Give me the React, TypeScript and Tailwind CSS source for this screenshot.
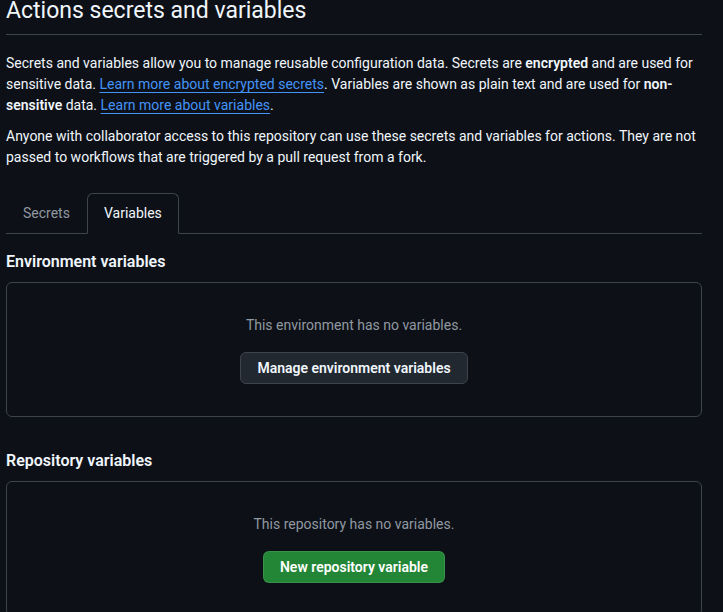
import React from "react";

export default function App() {
  return (
    <div className="min-h-screen bg-[#0d1117] text-[#f0f6fc] font-['Roboto',sans-serif] pl-[6px] pr-[21px] overflow-hidden">
      <div className="-mt-[4px] pb-2 border-b border-[#3d444d] mb-[18px]">
        <h2 className="text-[23px] leading-[30px] font-normal">Actions secrets and variables</h2>
      </div>

      <p className="text-[14px] leading-[21px] mb-[10px]">
        Secrets and variables allow you to manage reusable configuration data. Secrets are{" "}
        <strong className="font-semibold">encrypted</strong> and are used for sensitive data.{" "}
        <a href="#" className="text-[#4493f8] underline underline-offset-[3px]">
          Learn more about encrypted secrets
        </a>
        . Variables are shown as plain text and are used for{" "}
        <strong className="font-semibold">non-sensitive</strong> data.{" "}
        <a href="#" className="text-[#4493f8] underline underline-offset-[3px]">
          Learn more about variables
        </a>
        .
      </p>
      <p className="text-[14px] leading-[21px]">
        Anyone with collaborator access to this repository can use these secrets and variables for actions. They are not
        passed to workflows that are triggered by a pull request from a fork.
      </p>

      <nav className="mt-[25px] flex border-b border-[#3d444d] text-[14px] leading-[21px]">
        <a href="#" className="px-4 py-[9px] border border-transparent text-[#9198a1] -mb-px">
          Secrets
        </a>
        <a
          href="#"
          className="px-4 py-[9px] border border-[#3d444d] border-b-[#0d1117] rounded-t-md bg-[#0d1117] text-[#f0f6fc] -mb-px"
        >
          Variables
        </a>
      </nav>

      <h3 className="mt-4 mb-2 text-[16px] leading-[24px] font-semibold">Environment variables</h3>
      <div className="rounded-md border border-[#3d444d] p-8 flex flex-col items-center">
        <p className="text-[14px] leading-[21px] text-[#9198a1]">This environment has no variables.</p>
        <button className="mt-4 h-8 px-4 rounded-md border border-[#3d444d] bg-[#212830] text-[14px] font-semibold text-[#f0f6fc]">
          Manage environment variables
        </button>
      </div>

      <h3 className="mt-8 mb-2 text-[16px] leading-[24px] font-semibold">Repository variables</h3>
      <div className="rounded-md border border-[#3d444d] p-8 flex flex-col items-center">
        <p className="text-[14px] leading-[21px] text-[#9198a1]">This repository has no variables.</p>
        <button className="mt-4 h-8 px-4 rounded-md border border-[#ffffff1a] bg-[#238636] text-[14px] font-semibold text-white">
          New repository variable
        </button>
      </div>
    </div>
  );
}
